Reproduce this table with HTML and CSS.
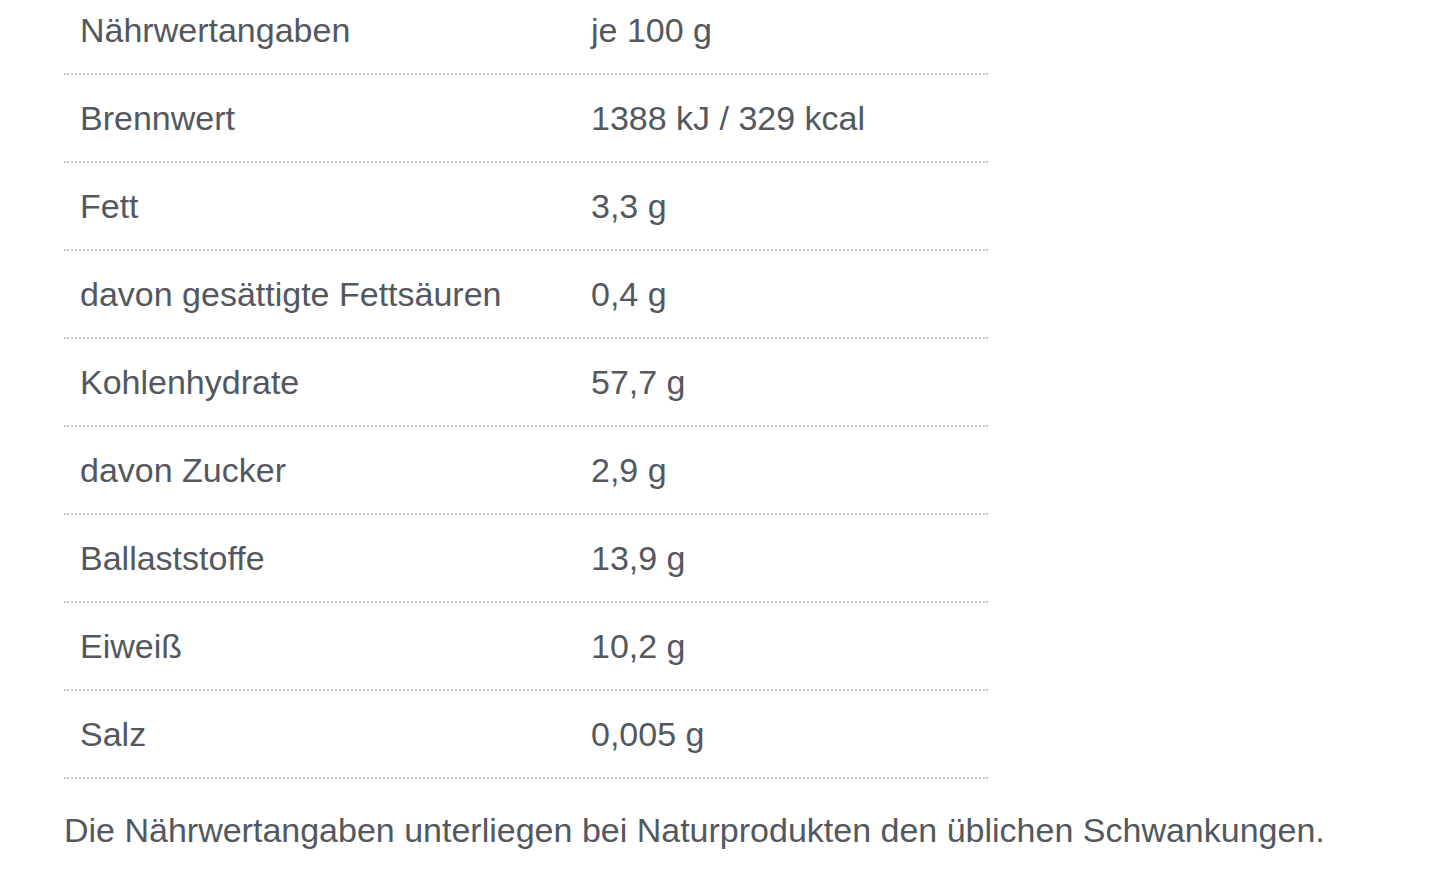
FILE: index.html
```html
<!DOCTYPE html>
<html lang="de">
<head>
<meta charset="utf-8">
<title>Nährwertangaben</title>
<link rel="stylesheet" href="styles.css">
</head>
<body>
<main class="page">
  <div class="nutrition">
    <div class="row"><div class="cell">Nährwertangaben</div><div class="cell">je 100 g</div></div>
    <div class="row"><div class="cell">Brennwert</div><div class="cell">1388 kJ / 329 kcal</div></div>
    <div class="row"><div class="cell">Fett</div><div class="cell">3,3 g</div></div>
    <div class="row"><div class="cell">davon gesättigte Fettsäuren</div><div class="cell">0,4 g</div></div>
    <div class="row"><div class="cell">Kohlenhydrate</div><div class="cell">57,7 g</div></div>
    <div class="row"><div class="cell">davon Zucker</div><div class="cell">2,9 g</div></div>
    <div class="row"><div class="cell">Ballaststoffe</div><div class="cell">13,9 g</div></div>
    <div class="row"><div class="cell">Eiweiß</div><div class="cell">10,2 g</div></div>
    <div class="row"><div class="cell">Salz</div><div class="cell">0,005 g</div></div>
  </div>
  <p class="note">Die Nährwertangaben unterliegen bei Naturprodukten den üblichen Schwankungen.</p>
</main>
</body>
</html>
```
FILE: styles.css
```css
html, body {
  margin: 0;
  padding: 0;
  background: #ffffff;
}
body {
  font-family: "Liberation Sans", Arial, Helvetica, sans-serif;
  color: #53585f;
  font-size: 34px;
}
.page {
  padding-left: 64px;
  margin-top: -13px;
}
.nutrition {
  width: 924px;
}
.row {
  display: grid;
  grid-template-columns: 511px 1fr;
  align-items: center;
  height: 86px;
  border-bottom: 2px dotted #c6c6c6;
}
.cell {
  padding: 0 16px;
  line-height: 40px;
  white-space: nowrap;
}
.note {
  margin: 28px 0 0;
  line-height: 46px;
  white-space: nowrap;
}
```
